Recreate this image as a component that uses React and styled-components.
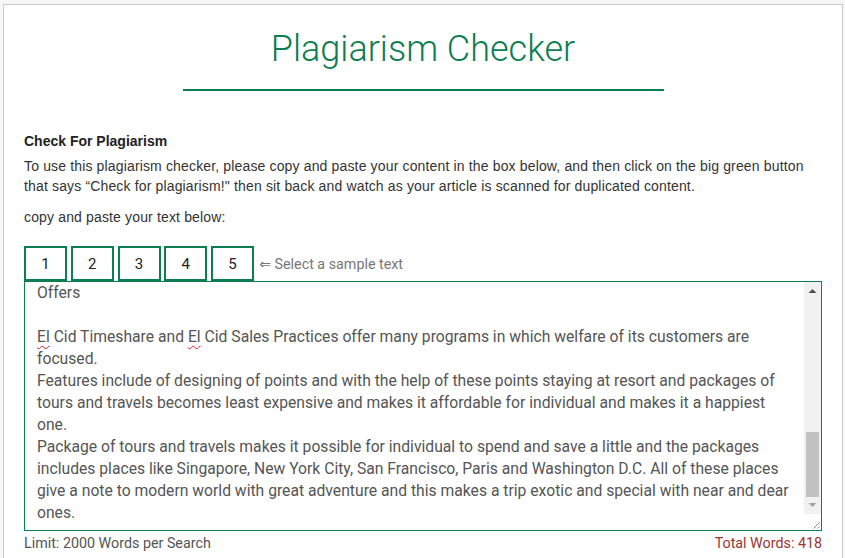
import React, { useLayoutEffect, useRef, useState } from 'react';
import styled, { createGlobalStyle } from 'styled-components';

const GREEN = '#0c7e4f';

const GlobalStyle = createGlobalStyle`
  html, body {
    margin: 0;
    padding: 0;
    overflow: hidden;
    background: #f6f6f6;
  }
`;

const earlier = [
  'El Cid Timeshare Review',
  '',
  'El Cid Resorts is one of the most popular names in the vacation ownership industry of Mexico. The company has been offering luxury accommodation, fine dining and world class amenities to its members for more than four decades, and its properties in Mazatlan, Cancun and the Riviera Maya are well known among travellers who want to spend quality time with family.',
  'The resorts are located close to the beach and every room is designed to give the guests a relaxed feeling. Members can choose from suites, villas and apartments according to the size of their family and the budget they have planned.',
  'Most of the members say that the staff is friendly and helpful and that the service is quick. Restaurants inside the resorts serve local and international food and there are bars, pools and spa centers for everyone who stays.',
  '',
  'Membership',
  '',
  'Membership of El Cid Timeshare gives the owner right to use the resort for a fixed number of weeks in every year. The owner can also exchange the week with other resorts around the world through exchange programs.',
  'Members pay a one time purchase price and a yearly maintenance fee which covers cleaning, repairs and the general upkeep of the property. The fee is reviewed every year by the management.',
  'Owners who cannot travel in a year can save their points and use them in the next year or rent the week to a friend or relative.',
  '',
];

const later = [
  'Offers',
  '',
  'EL_CID_LINE',
  'Features include of designing of points and with the help of these points staying at resort and packages of tours and travels becomes least expensive and makes it affordable for individual and makes it a happiest one.',
  'Package of tours and travels makes it possible for individual to spend and save a little and the packages includes places like Singapore, New York City, San Francisco, Paris and Washington D.C. All of these places give a note to modern world with great adventure and this makes a trip exotic and special with near and dear ones.',
];

const TRACK = 198;

function App() {
  const boxRef = useRef(null);
  const [thumb, setThumb] = useState({ top: 135, height: 63 });

  useLayoutEffect(() => {
    const el = boxRef.current;
    if (!el) return;
    el.scrollTop = el.scrollHeight;
    const height = Math.max(20, (TRACK * el.clientHeight) / el.scrollHeight);
    const range = el.scrollHeight - el.clientHeight;
    const top = range > 0 ? ((TRACK - height) * el.scrollTop) / range : 0;
    setThumb({ top, height });
  }, []);

  const renderLine = (line, i) => {
    if (line === 'EL_CID_LINE') {
      return (
        <Line key={i}>
          <Misspelled>El</Misspelled> Cid Timeshare and <Misspelled>El</Misspelled> Cid Sales Practices offer many
          programs in which welfare of its customers are focused.
        </Line>
      );
    }
    return <Line key={i}>{line || '\u00a0'}</Line>;
  };

  return (
    <>
      <GlobalStyle />
      <Card>
        <Title>Plagiarism Checker</Title>
        <Divider />
        <Heading>Check For Plagiarism</Heading>
        <Intro>
          To use this plagiarism checker, please copy and paste your content in the box below, and then click on the big
          green button that says “Check for plagiarism!" then sit back and watch as your article is scanned for
          duplicated content.
        </Intro>
        <Prompt>copy and paste your text below:</Prompt>
        <SampleBar>
          {[1, 2, 3, 4, 5].map(n => (
            <SampleButton key={n}>{n}</SampleButton>
          ))}
          <SampleHint>
            <Arrow>⇐</Arrow> Select a sample text
          </SampleHint>
        </SampleBar>
        <TextBox>
          <TextScroll ref={boxRef} role="textbox" aria-multiline="true">
            {earlier.map(renderLine)}
            {later.map((l, i) => renderLine(l, 'b' + i))}
          </TextScroll>
          <ScrollBar>
            <ScrollButton>
              <svg width="17" height="17" viewBox="0 0 17 17">
                <path d="M4.5 11 L8.5 7 L12.5 11 Z" fill="#505050" />
              </svg>
            </ScrollButton>
            <Track>
              <Thumb style={{ top: thumb.top, height: thumb.height }} />
            </Track>
            <ScrollButton>
              <svg width="17" height="17" viewBox="0 0 17 17">
                <path d="M4.5 6 L12.5 6 L8.5 10 Z" fill="#a3a3a3" />
              </svg>
            </ScrollButton>
            <Corner>
              <svg width="17" height="16" viewBox="0 0 17 16">
                <path d="M15.5 8.5 L9.5 14.5 M15.5 12.5 L13.5 14.5" stroke="#8a8a8a" strokeWidth="1" />
              </svg>
            </Corner>
          </ScrollBar>
        </TextBox>
        <Footer>
          <Limit>Limit: 2000 Words per Search</Limit>
          <Count>Total Words: 418</Count>
        </Footer>
      </Card>
    </>
  );
}

const Card = styled.div`
  box-sizing: border-box;
  width: 840px;
  min-height: 620px;
  margin: 4px 0 0 3px;
  padding: 22px 20px 0;
  background: #fff;
  border: 1px solid #c9c9c9;
  border-bottom: none;
`;

const Title = styled.h1`
  margin: 0;
  text-align: center;
  font-family: Roboto, sans-serif;
  font-weight: 300;
  font-size: 36px;
  line-height: 44px;
  color: ${GREEN};
`;

const Divider = styled.div`
  width: 481px;
  height: 2px;
  margin: 18px auto 0;
  background: ${GREEN};
`;

const Heading = styled.h3`
  margin: 40px 0 0;
  font-family: 'Liberation Sans', Arial, sans-serif;
  font-weight: 700;
  font-size: 14px;
  line-height: 20px;
  color: #222;
`;

const Intro = styled.p`
  margin: 5px 0 0;
  font-family: 'Liberation Sans', Arial, sans-serif;
  font-size: 14px;
  letter-spacing: 0.15px;
  line-height: 20px;
  color: #333;
`;

const Prompt = styled(Intro)`
  margin-top: 11px;
`;

const SampleBar = styled.div`
  display: flex;
  align-items: center;
  gap: 3.75px;
  margin-top: 19px;
`;

const SampleButton = styled.button`
  box-sizing: border-box;
  width: 43px;
  height: 35px;
  padding: 0;
  background: #fff;
  border: 2px solid ${GREEN};
  font-family: Roboto, sans-serif;
  font-size: 15px;
  color: #222;
  cursor: pointer;
`;

const SampleHint = styled.span`
  margin-left: 1.5px;
  font-family: Roboto, sans-serif;
  font-size: 14.3px;
  color: #777;
`;

const Arrow = styled.span`
  font-family: 'DejaVu Sans', sans-serif;
  font-size: 14px;
`;

const TextBox = styled.div`
  position: relative;
  box-sizing: border-box;
  height: 250px;
  border: 1px solid ${GREEN};
`;

const TextScroll = styled.div`
  box-sizing: border-box;
  height: 100%;
  padding: 6px 29px 6px 12px;
  overflow: hidden;
  font-family: Roboto, sans-serif;
  font-size: 15.7px;
  line-height: 22px;
  color: #555;
`;

const ScrollBar = styled.div`
  position: absolute;
  top: 0;
  right: 0;
  bottom: 0;
  width: 17px;
  display: flex;
  flex-direction: column;
  background: #f1f1f1;
`;

const ScrollButton = styled.div`
  height: 17px;
  flex: none;
  svg {
    display: block;
  }
`;

const Track = styled.div`
  position: relative;
  flex: 1;
`;

const Thumb = styled.div`
  position: absolute;
  left: 2px;
  right: 2px;
  background: #c1c1c1;
`;

const Corner = styled.div`
  height: 16px;
  flex: none;
  background: #fff;
  svg {
    display: block;
  }
`;

const Line = styled.div`
  white-space: pre-wrap;
`;

const Misspelled = styled.span`
  text-decoration: underline wavy #e02020;
  text-decoration-thickness: 1px;
  text-underline-offset: 3px;
`;

const Footer = styled.div`
  display: flex;
  justify-content: space-between;
  margin-top: 2px;
  font-family: Roboto, sans-serif;
  font-size: 14.3px;
  line-height: 20px;
`;

const Limit = styled.span`
  color: #555;
`;

const Count = styled.span`
  color: #9b3535;
`;

export default App;
